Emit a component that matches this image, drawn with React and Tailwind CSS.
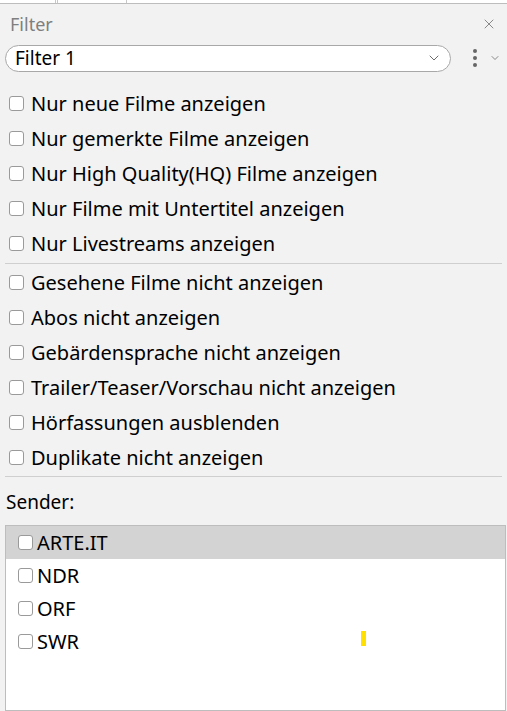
import { X, ChevronDown } from "lucide-react";

const group1 = [
  "Nur neue Filme anzeigen",
  "Nur gemerkte Filme anzeigen",
  "Nur High Quality(HQ) Filme anzeigen",
  "Nur Filme mit Untertitel anzeigen",
  "Nur Livestreams anzeigen",
];

const group2 = [
  "Gesehene Filme nicht anzeigen",
  "Abos nicht anzeigen",
  "Gebärdensprache nicht anzeigen",
  "Trailer/Teaser/Vorschau nicht anzeigen",
  "Hörfassungen ausblenden",
  "Duplikate nicht anzeigen",
];

const senders = ["ARTE.IT", "NDR", "ORF", "SWR"];

function Box() {
  return <span className="w-[15px] h-[15px] shrink-0 rounded-[3px] border border-[#9a9a9a] bg-white" />;
}

function Row({ label }) {
  return (
    <label className="flex items-center h-[35px] pl-[9px] gap-[7px] text-[20px] text-black">
      <Box />
      <span>{label}</span>
    </label>
  );
}

export default function App() {
  return (
    <div
      className="w-[507px] h-[711px] bg-white overflow-hidden flex flex-col"
      style={{ fontFamily: '"Noto Sans", "Open Sans", sans-serif' }}
    >
      <div className="h-[3px] relative shrink-0">
        <div className="absolute left-[55px] top-0 w-[72px] h-[3px] border-l-[3px] border-r border-double border-[#c8c8c8]" />
      </div>
      <div className="flex-1 flex flex-col bg-[#f2f2f2] border-t border-[#bdbdbd]">
        <div className="flex items-center justify-between h-[39px] pl-[10px] pr-[10px]">
          <span className="text-[18px] text-[#7f7f7f] leading-none">Filter</span>
          <X size={16} strokeWidth={1.3} className="text-[#777]" />
        </div>
        <div className="flex items-center h-[30px] pl-[5px] pr-[6px]">
          <div className="w-[446px] h-[27px] rounded-full border border-[#a8a8a8] bg-white flex items-center pl-[9px] pr-[8px]">
            <span className="flex-1 text-[19px] text-black leading-none">Filter 1</span>
            <ChevronDown size={16} strokeWidth={1.3} className="text-[#555]" />
          </div>
          <div className="flex-1 flex items-center justify-end gap-[12px]">
            <div className="flex flex-col gap-[3px]">
              <span className="w-[4px] h-[4px] rounded-full bg-[#666]" />
              <span className="w-[4px] h-[4px] rounded-full bg-[#666]" />
              <span className="w-[4px] h-[4px] rounded-full bg-[#666]" />
            </div>
            <ChevronDown size={12} strokeWidth={1.5} className="text-[#666]" />
          </div>
        </div>
        <div className="h-[13px]" />
        {group1.map((l) => (
          <Row key={l} label={l} />
        ))}
        <div className="mx-[5px] mt-[2px] mb-[1px] border-t border-[#cfcfcf]" />
        {group2.map((l) => (
          <Row key={l} label={l} />
        ))}
        <div className="mx-[5px] mt-[1px] border-t border-[#cfcfcf]" />
        <div className="h-[35px] flex items-end pl-[6px] text-[19px] text-black leading-none">Sender:</div>
        <div className="h-[13px]" />
        <div className="flex-1 ml-[5px] mr-[1px] border border-[#bdbdbd] bg-white">
          {senders.map((s, i) => (
            <div
              key={s}
              className={
                "relative flex items-center h-[33px] pl-[12px] gap-[4px] text-[20px] text-black " +
                (i === 0 ? "bg-[#d3d3d3]" : "")
              }
            >
              <Box />
              <span>{s}</span>
              {i === 3 && <span className="absolute left-[355px] top-[6px] w-[5px] h-[15px] bg-[#ffe000]" />}
            </div>
          ))}
        </div>
      </div>
    </div>
  );
}
